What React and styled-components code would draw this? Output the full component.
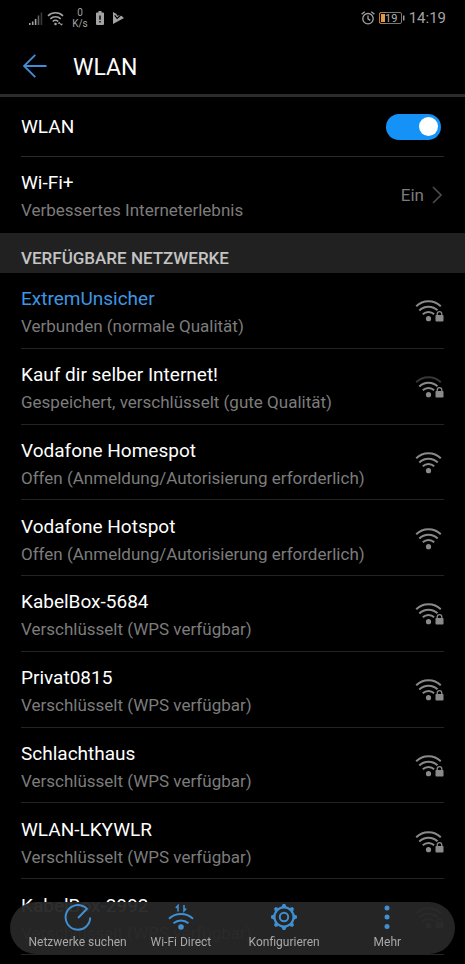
import React, { useState } from 'react';
import styled, { createGlobalStyle } from 'styled-components';

const GlobalStyle = createGlobalStyle`
  * {
    box-sizing: border-box;
  }

  body {
    margin: 0;
    background: #000;
    font-family: Roboto, 'Liberation Sans', sans-serif;
  }
`;

const Screen = styled.div`
  display: flex;
  flex-direction: column;
  height: 100vh;
  overflow: hidden;
  background: #000;
  color: #fff;
`;

const StatusBar = styled.div`
  display: flex;
  flex-shrink: 0;
  align-items: center;
  justify-content: space-between;
  height: 36px;
  padding: 0 19px 0 28px;
  color: #a3a3a3;
`;

const StatusGroup = styled.div`
  display: flex;
  align-items: center;
  gap: ${({ $gap }) => $gap}px;
`;

const Speed = styled.span`
  display: flex;
  flex-direction: column;
  width: 18px;
  font-size: 10px;
  line-height: 11px;
  text-align: center;
`;

const Clock = styled.span`
  font-size: 15px;
`;

const BatteryLevel = styled.text`
  fill: #b4b4b4;
  font-size: 11px;
`;

const Header = styled.header`
  display: flex;
  flex-shrink: 0;
  align-items: center;
  gap: 26px;
  height: 61px;
  padding: 2px 23px 0;
  border-bottom: 3px solid #2b2b2b;
`;

const BackButton = styled.button`
  display: flex;
  padding: 0;
  border: 0;
  background: none;
  color: #3d8fd9;
`;

const PageTitle = styled.h1`
  margin: 0;
  padding-top: 3px;
  font-size: 23px;
  font-weight: 400;
  line-height: 28px;
`;

const SwitchRow = styled.label`
  display: flex;
  flex-shrink: 0;
  align-items: center;
  justify-content: space-between;
  height: 60px;
  margin: 0 21px;
  border-bottom: 1px solid #2a2a2a;
  font-size: 19px;
`;

const Switch = styled.input`
  display: flex;
  align-items: center;
  appearance: none;
  width: 55px;
  height: 26px;
  margin: 0 3px 0 0;
  padding: 0 3px;
  border-radius: 13px;
  background: #555;

  &::before {
    content: '';
    width: 19px;
    height: 19px;
    border-radius: 50%;
    background: #fff;
  }

  &:checked {
    justify-content: flex-end;
    background: #1492f8;
  }
`;

const Labels = styled.span`
  display: flex;
  flex-direction: column;
  padding-top: 2px;
`;

const EntryButton = styled.button`
  display: flex;
  align-items: center;
  justify-content: space-between;
  width: 100%;
  height: 76px;
  padding: 0;
  border: 0;
  border-bottom: ${({ $divider }) => ($divider ? '1px solid #242424' : '0')};
  background: none;
  color: #fff;
  font: inherit;
  text-align: left;
`;

const PlusSection = styled.section`
  flex-shrink: 0;
  padding: 0 21px;
`;

const Name = styled.span`
  color: ${({ $active }) => ($active ? '#3d97e4' : '#fff')};
  font-size: 19px;
  line-height: 28px;
`;

const Detail = styled.span`
  color: #7c7c7c;
  font-size: 17px;
  line-height: 26px;
`;

const Value = styled.span`
  display: flex;
  align-items: center;
  gap: 8px;
  padding-right: 2px;
  color: #7c7c7c;
  font-size: 17px;
`;

const SectionTitle = styled.h2`
  flex-shrink: 0;
  height: 40px;
  margin: 0;
  padding: 5px 21px 0;
  background: #212121;
  color: #c4c4c4;
  font-size: 17px;
  font-weight: 500;
  line-height: 40px;
`;

const NetworkList = styled.ul`
  display: grid;
  flex: 1;
  grid-auto-rows: 1fr;
  margin: 0;
  padding: 0 21px 9px;
  list-style: none;

  ${EntryButton} {
    height: 100%;
    padding-top: 2px;
  }
`;

const Toolbar = styled.nav`
  position: fixed;
  right: 10px;
  bottom: 10px;
  left: 10px;
  display: grid;
  grid-template-columns: repeat(4, 1fr);
  height: 52px;
  padding: 0 16px;
  border-radius: 26px;
  background: rgba(38, 38, 38, 0.96);
`;

const ToolButton = styled.button`
  display: flex;
  flex-direction: column;
  align-items: center;
  gap: 2px;
  padding: 1px 0 0;
  border: 0;
  background: none;
  color: #a8a8a8;
  font: inherit;
  font-size: 12px;
  line-height: 18px;
  white-space: nowrap;

  svg {
    color: #3f8fd2;
  }
`;

const SignalIcon = () => (
  <svg width="15" height="15" viewBox="0 0 15 15" fill="currentColor">
    <path d="M1 12h1.6v2H1zM3.9 10.5h1.6V14H3.9zM6.8 8h1.6v6H6.8z" />
    <path d="M9.7 4.5h1.6V14H9.7z" opacity="0.6" />
    <path d="M12.6 1.5h1.6V14h-1.6z" opacity="0.35" />
  </svg>
);

const StatusWifiIcon = () => (
  <svg width="17" height="15" viewBox="0 0 17 15" fill="none" stroke="currentColor" strokeWidth="1.6">
    <path d="M1 4.8a10.8 10.8 0 0 1 15 0M3.3 7.8a7.5 7.5 0 0 1 10.4 0M5.7 10.5a4.2 4.2 0 0 1 5.6 0" />
    <circle cx="8.5" cy="13" r="1.3" fill="currentColor" stroke="none" />
    <path d="M10.5 12.7l1.7-2 1.7 2zM12.8 12.7l1.6 2 1.6-2z" fill="currentColor" stroke="none" />
  </svg>
);

const BatteryAlertIcon = () => (
  <svg width="8" height="14" viewBox="0 0 8 14">
    <path d="M2.5 0h3v1.5H7a1 1 0 0 1 1 1V13a1 1 0 0 1-1 1H1a1 1 0 0 1-1-1V2.5a1 1 0 0 1 1-1h1.5z" fill="currentColor" />
    <path d="M3.3 4.5h1.4v4.3H3.3zM3.3 10h1.4v1.5H3.3z" fill="#000" />
  </svg>
);

const PlayCheckIcon = () => (
  <svg width="11" height="12" viewBox="0 0 11 12">
    <path d="M0 0l3.6 2L4 3.8 7.5 3 11 6 0 12z" fill="currentColor" />
    <path d="M1.6 3.4l2.6 3L8.8 2" fill="none" stroke="#000" strokeWidth="1.2" />
  </svg>
);

const AlarmIcon = () => (
  <svg width="14" height="14" viewBox="0 0 14 14" fill="none" stroke="currentColor" strokeWidth="1.3">
    <circle cx="7" cy="7.7" r="5.2" />
    <path d="M7 4.5v3.4l2.3 1.5M.6 3.3L3.7.8M13.4 3.3L10.3.8" />
  </svg>
);

const BatteryIcon = ({ level }) => (
  <svg width="26" height="12" viewBox="0 0 26 12">
    <rect x="0.5" y="0.5" width="22" height="11" rx="1.5" fill="none" stroke="#777" />
    <path d="M7 .5H2A1.5 1.5 0 0 0 .5 2v8A1.5 1.5 0 0 0 2 11.5h5" fill="none" stroke="#c07c35" />
    <path d="M2 2h4v8H2z" fill="#e09a4e" />
    <path d="M24 3.5h1.5v5H24z" fill="#999" />
    <BatteryLevel x="6" y="10">{level}</BatteryLevel>
  </svg>
);

const BackIcon = () => (
  <svg width="24" height="24" viewBox="0 0 24 24" fill="none" stroke="currentColor" strokeWidth="1.8">
    <path d="M23.5 12H1M12.3.8L1 12l11.3 11.2" />
  </svg>
);

const ChevronIcon = () => (
  <svg width="10" height="18" viewBox="0 0 10 18" fill="none" stroke="#4c4c4c" strokeWidth="1.6">
    <path d="M1 1l8 8-8 8" />
  </svg>
);

const WifiIcon = ({ locked, weak }) => (
  <svg width="29" height="22" viewBox="0 0 29 22" fill="none" stroke="#8a8a8a" strokeWidth="1.9">
    <path d="M1.2 6.3a17.5 17.5 0 0 1 24.6 0" opacity={weak ? 0.4 : 1} />
    <path d="M4.3 10.5a13 13 0 0 1 18.4 0M7.8 14.3a8.2 8.2 0 0 1 11.4 0" />
    <circle cx="13.5" cy="18.7" r="2.6" fill="#8a8a8a" stroke="none" />
    {locked && (
      <>
        <path d="M19.5 21.5v-7l1-3 3.500-2 4 2 1 3v7z" fill="#000" stroke="none" />
        <rect x="20.5" y="15" width="8" height="6.5" rx="0.8" fill="#8a8a8a" stroke="none" />
        <path d="M22.2 15.5V14a2.3 2.3 0 0 1 4.6 0v1.5" strokeWidth="1.3" />
      </>
    )}
  </svg>
);

const ScanIcon = () => (
  <svg width="28" height="28" viewBox="0 0 28 28" fill="none" stroke="currentColor" strokeWidth="2" strokeLinejoin="round">
    <path d="M26.2 14.5A12.3 12.3 0 1 1 18 2.800q3 .8 5 3L14 15" />
  </svg>
);

const DirectIcon = () => (
  <svg width="28" height="28" viewBox="0 0 28 28" fill="none" stroke="currentColor" strokeWidth="2">
    <path d="M2 15.8a17.5 17.5 0 0 1 24 0M6.5 20.3a11.5 11.5 0 0 1 15 0" />
    <circle cx="14" cy="24" r="2.8" fill="currentColor" stroke="none" />
    <path d="M11 8.5v-6L8.8 5M17 2v6l2.200-2.500" strokeWidth="1.6" />
  </svg>
);

const GearIcon = () => (
  <svg width="28" height="28" viewBox="0 0 28 28" fill="none" stroke="currentColor">
    <circle cx="14" cy="14" r="9.6" strokeWidth="2.2" />
    <circle cx="14" cy="14" r="4.2" strokeWidth="2" />
    {[0, 45, 90, 135, 180, 225, 270, 315].map((angle) => (
      <path key={angle} d="M11.3 4.2L12.8 1h2.4l1.5 3.2z" fill="currentColor" stroke="none" transform={`rotate(${angle} 14 14)`} />
    ))}
  </svg>
);

const MoreIcon = () => (
  <svg width="28" height="28" viewBox="0 0 28 28" fill="currentColor">
    <circle cx="14" cy="5" r="2.5" />
    <circle cx="14" cy="14" r="2.5" />
    <circle cx="14" cy="23.5" r="2.5" />
  </svg>
);

const networks = [
  { name: 'ExtremUnsicher', detail: 'Verbunden (normale Qualität)', locked: true, active: true },
  { name: 'Kauf dir selber Internet!', detail: 'Gespeichert, verschlüsselt (gute Qualität)', locked: true, weak: true },
  { name: 'Vodafone Homespot', detail: 'Offen (Anmeldung/Autorisierung erforderlich)' },
  { name: 'Vodafone Hotspot', detail: 'Offen (Anmeldung/Autorisierung erforderlich)' },
  { name: 'KabelBox-5684', detail: 'Verschlüsselt (WPS verfügbar)', locked: true },
  { name: 'Privat0815', detail: 'Verschlüsselt (WPS verfügbar)', locked: true },
  { name: 'Schlachthaus', detail: 'Verschlüsselt (WPS verfügbar)', locked: true },
  { name: 'WLAN-LKYWLR', detail: 'Verschlüsselt (WPS verfügbar)', locked: true },
  { name: 'KabelBox-2992', detail: 'Verschlüsselt (WPS verfügbar)', locked: true },
];

const tools = [
  { label: 'Netzwerke suchen', Icon: ScanIcon },
  { label: 'Wi-Fi Direct', Icon: DirectIcon },
  { label: 'Konfigurieren', Icon: GearIcon },
  { label: 'Mehr', Icon: MoreIcon },
];

const App = () => {
  const [enabled, setEnabled] = useState(true);

  return (
    <Screen>
      <GlobalStyle />
      <StatusBar>
        <StatusGroup $gap={7}>
          <StatusGroup $gap={4}>
            <SignalIcon />
            <StatusWifiIcon />
          </StatusGroup>
          <Speed>
            <span>0</span>
            <span>K/s</span>
          </Speed>
          <StatusGroup $gap={9}>
            <BatteryAlertIcon />
            <PlayCheckIcon />
          </StatusGroup>
        </StatusGroup>
        <StatusGroup $gap={4}>
          <AlarmIcon />
          <BatteryIcon level={19} />
          <Clock>14:19</Clock>
        </StatusGroup>
      </StatusBar>
      <Header>
        <BackButton type="button" aria-label="Zurück">
          <BackIcon />
        </BackButton>
        <PageTitle>WLAN</PageTitle>
      </Header>
      <SwitchRow>
        WLAN
        <Switch type="checkbox" role="switch" checked={enabled} onChange={(e) => setEnabled(e.target.checked)} />
      </SwitchRow>
      <PlusSection>
        <EntryButton type="button">
          <Labels>
            <Name>Wi-Fi+</Name>
            <Detail>Verbessertes Interneterlebnis</Detail>
          </Labels>
          <Value>
            Ein
            <ChevronIcon />
          </Value>
        </EntryButton>
      </PlusSection>
      <SectionTitle>VERFÜGBARE NETZWERKE</SectionTitle>
      <NetworkList>
        {networks.map(({ name, detail, active, locked, weak }) => (
          <li key={name}>
            <EntryButton type="button" $divider>
              <Labels>
                <Name $active={active}>{name}</Name>
                <Detail>{detail}</Detail>
              </Labels>
              <WifiIcon locked={locked} weak={weak} />
            </EntryButton>
          </li>
        ))}
      </NetworkList>
      <Toolbar>
        {tools.map(({ label, Icon }) => (
          <ToolButton key={label} type="button">
            <Icon />
            {label}
          </ToolButton>
        ))}
      </Toolbar>
    </Screen>
  );
};

export default App;
